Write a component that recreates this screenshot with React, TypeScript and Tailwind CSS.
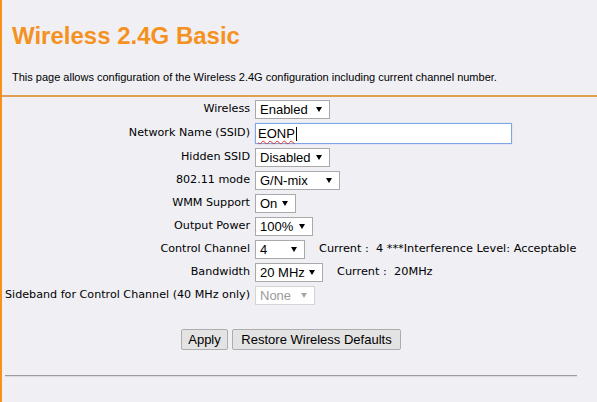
import React from "react";

type Row = {
  label: string;
  value: string;
  width: string;
  disabled?: boolean;
  note?: string;
};

// select-like box with the small black triangle on the right
function FakeSelect({ value, width, disabled }: { value: string; width: string; disabled?: boolean }) {
  return (
    <div
      className={`flex h-[19px] items-center justify-between border bg-white pl-[4px] pr-[7px] font-['Liberation_Sans',Arial,sans-serif] text-[13px] leading-none ${width} ${
        disabled ? "border-[#d4d4d4] text-[#9a9a9a]" : "border-[#a9a9a9] text-black"
      }`}
    >
      <span>{value}</span>
      <svg width="6" height="5" viewBox="0 0 6 5">
        <polygon points="0,0 6,0 3,5" fill={disabled ? "#a8a8a8" : "#000"} />
      </svg>
    </div>
  );
}

const rows: Row[] = [
  { label: "Wireless", value: "Enabled", width: "w-[75px]" },
  { label: "Network Name (SSID)", value: "", width: "" },
  { label: "Hidden SSID", value: "Disabled", width: "w-[75px]" },
  { label: "802.11 mode", value: "G/N-mix", width: "w-[85px]" },
  { label: "WMM Support", value: "On", width: "w-[41px]" },
  { label: "Output Power", value: "100%", width: "w-[58px]" },
  {
    label: "Control Channel",
    value: "4",
    width: "w-[50px]",
    note: "Current :\u00a0\u00a04 ***Interference Level: Acceptable",
  },
  { label: "Bandwidth", value: "20 MHz", width: "w-[68px]", note: "Current :\u00a0\u00a020MHz" },
  { label: "Sideband for Control Channel (40 MHz only)", value: "None", width: "w-[60px]", disabled: true },
];

export default function App() {
  return (
    <div className="min-h-[402px] w-full overflow-hidden border-l-2 border-[#f7911c] bg-[#efeff4]">
      <h1 className="pl-[10px] pt-[22px] font-['Liberation_Sans',Arial,sans-serif] text-[24px] font-bold leading-[28px] text-[#f5921f]">
        Wireless 2.4G Basic
      </h1>
      <p className="mt-[21px] pl-[10px] font-['Liberation_Sans',Arial,sans-serif] text-[11px] leading-[13px] text-black">
        This page allows configuration of the Wireless 2.4G configuration including current channel number.
      </p>
      <div className="mt-[11px] h-[2px] bg-[#e0a052]" />

      <div className="w-[575px] pl-[3px] pt-[1px]">
        <div className="grid grid-cols-[245px_1fr] gap-x-[5px]">
          {rows.map((r) =>
            r.label === "Network Name (SSID)" ? (
              <React.Fragment key={r.label}>
                <div className="flex h-[25px] items-center justify-end font-['DejaVu_Sans',Verdana,sans-serif] text-[11.15px] text-black">
                  {r.label}
                </div>
                <div className="flex h-[25px] items-center">
                  <div className="flex h-[21px] w-[257px] items-center border border-[#7ea6e0] bg-white pl-[2px] font-['Liberation_Sans',Arial,sans-serif] text-[13px] text-black shadow-[0_0_1px_#a9c4ee]">
                    <span className="underline decoration-[#e03030] decoration-wavy decoration-1 underline-offset-[2px]">
                      EONP
                    </span>
                    <span className="ml-px h-[14px] w-px bg-black" />
                  </div>
                </div>
              </React.Fragment>
            ) : (
              <React.Fragment key={r.label}>
                <div className="flex h-[23px] items-center justify-end whitespace-nowrap font-['DejaVu_Sans',Verdana,sans-serif] text-[11.15px] text-black">
                  {r.label}
                </div>
                <div className="flex h-[23px] items-center">
                  <FakeSelect value={r.value} width={r.width} disabled={r.disabled} />
                  {r.note && (
                    <span className="ml-[14px] whitespace-nowrap font-['DejaVu_Sans',Verdana,sans-serif] text-[11.3px] text-black">
                      {r.note}
                    </span>
                  )}
                </div>
              </React.Fragment>
            ),
          )}
        </div>

        <div className="mt-[22px] flex justify-center gap-[4px] font-['Liberation_Sans',Arial,sans-serif] text-[13px] text-black">
          <button className="h-[21px] w-[47px] rounded-[2px] border border-[#adadad] bg-[#e3e3e3] leading-none">
            Apply
          </button>
          <button className="h-[21px] w-[169px] rounded-[2px] border border-[#adadad] bg-[#e3e3e3] leading-none">
            Restore Wireless Defaults
          </button>
        </div>

        <div className="mt-[25px]">
          <div className="h-px bg-[#9c9c9c]" />
          <div className="h-px bg-[#dcdce0]" />
        </div>
      </div>
    </div>
  );
}
